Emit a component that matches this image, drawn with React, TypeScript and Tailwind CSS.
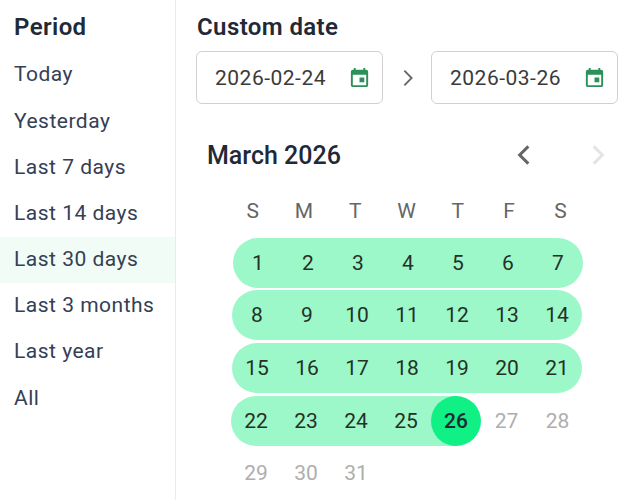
const periods = ["Today", "Yesterday", "Last 7 days", "Last 14 days", "Last 30 days", "Last 3 months", "Last year", "All"];
const weekdays = ["S", "M", "T", "W", "T", "F", "S"];

const rows = [
  { days: [1, 2, 3, 4, 5, 6, 7], className: "ml-[57px] mb-[2px] bg-[#9cf8c8]" },
  { days: [8, 9, 10, 11, 12, 13, 14], className: "ml-[56px] mb-[3px] bg-[#9cf8c8]" },
  { days: [15, 16, 17, 18, 19, 20, 21], className: "ml-[56px] mb-[3px] bg-[#9cf8c8]" },
  { days: [22, 23, 24, 25, 26, 27, 28], className: "ml-[55px] mb-[2px]" },
  { days: [29, 30, 31], className: "ml-[55px]" },
];

function CalendarIcon() {
  return (
    <svg width="23" height="23" viewBox="0 0 24 24" fill="#2a9159">
      <path d="M19 4h-1V2h-2v2H8V2H6v2H5c-1.1 0-2 .9-2 2v14c0 1.1.9 2 2 2h14c1.1 0 2-.9 2-2V6c0-1.1-.9-2-2-2zm0 16H5V9h14v11z" />
      <path d="M12 12h5v5h-5z" />
    </svg>
  );
}

function Chevron({ dir, color, size, width }: { dir: "left" | "right"; color: string; size: number; width: number }) {
  return (
    <svg width={size} height={size} viewBox="0 0 24 24" fill="none" stroke={color} strokeWidth={width}>
      <path d={dir === "left" ? "M16 4l-8 8 8 8" : "M8 4l8 8-8 8"} />
    </svg>
  );
}

function DateInput({ value }: { value: string }) {
  return (
    <div className="flex h-[53px] w-[187px] items-center justify-between rounded-md border border-[#d0d0d0] bg-white pl-[18px] pr-[11px] text-[21px] tracking-[0.5px] text-[#3a3a3a]">
      <span className="pt-[2px]">{value}</span>
      <CalendarIcon />
    </div>
  );
}

function Day({ day, pill, today }: { day: number; pill: boolean; today: boolean }) {
  return (
    <div
      className={`flex h-[50px] w-full items-center justify-center rounded-full pt-[2px] text-[21px] ${
        today ? "bg-[#10f085] font-medium text-[#1f2937]" : pill ? "text-[#253029]" : "text-[#aeaeae]"
      }`}
    >
      {day}
    </div>
  );
}

function cellClass(d: number) {
  if (d === 22) return "w-[50px] rounded-l-full bg-[#9cf8c8]";
  if (d >= 23 && d <= 25) return "w-[50px] bg-[#9cf8c8]";
  if (d === 26) return "w-[50px] bg-[linear-gradient(90deg,#9cf8c8_50%,transparent_50%)]";
  if (d === 27 || d === 28) return "w-[51px]";
  return "w-[50px]";
}

export default function App() {
  return (
    <div className="flex h-[500px] w-[635px] overflow-hidden bg-white font-['Roboto',sans-serif]">
      <div className="w-[176px] shrink-0 border-r border-[#e8ecef]">
        <div className="flex h-[52px] items-center px-[14px] pt-[2px] text-[24px] font-semibold tracking-[0.4px] text-[#1f2937]">Period</div>
        {periods.map((p) => (
          <div
            key={p}
            className={`flex h-[46.2px] items-center px-[14px] text-[21px] tracking-[0.5px] text-[#344054] ${p === "Last 30 days" ? "bg-[#f2fcf6]" : ""}`}
          >
            {p}
          </div>
        ))}
      </div>
      <div className="flex-1">
        <div className="flex h-[51px] items-center pl-[21px] pt-[3px] text-[24px] font-semibold tracking-[0.4px] text-[#1f2937]">Custom date</div>
        <div className="flex items-center pl-[20px]">
          <DateInput value="2026-02-24" />
          <div className="flex w-[48px] justify-center pl-px">
            <Chevron dir="right" color="#666666" size={22} width={2} />
          </div>
          <DateInput value="2026-03-26" />
        </div>
        <div className="mt-[28px] flex h-[46px] items-center justify-between pl-[31px] pr-[24px]">
          <span className="pt-[2px] text-[25px] font-medium text-[#1f2937]">March 2026</span>
          <div className="flex items-center gap-[48px]">
            <Chevron dir="left" color="#666666" size={26} width={2.8} />
            <Chevron dir="right" color="#e4e4e4" size={26} width={2.8} />
          </div>
        </div>
        <div className="ml-[51px] mt-[8px] flex h-[50px] items-center pt-[2px] text-[21px] text-[#666666]">
          {weekdays.map((w, i) => (
            <div key={i} className="w-[51.3px] text-center">{w}</div>
          ))}
        </div>
        <div className="mt-[2px]">
          {rows.map((row) => (
            <div key={row.days[0]} className={`flex w-fit rounded-full ${row.className}`}>
              {row.days.map((d) => (
                <div key={d} className={cellClass(d)}>
                  <Day day={d} pill={d <= 26} today={d === 26} />
                </div>
              ))}
            </div>
          ))}
        </div>
      </div>
    </div>
  );
}
